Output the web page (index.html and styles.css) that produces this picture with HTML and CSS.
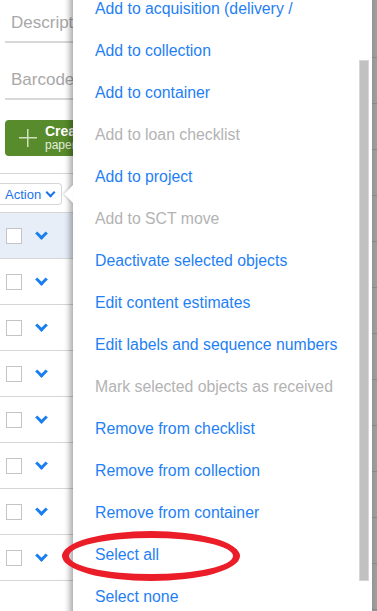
FILE: index.html
```html
<!DOCTYPE html>
<html lang="en">
<head>
  <meta charset="UTF-8">
  <meta name="viewport" content="width=device-width, initial-scale=1.0">
  <title>Objects</title>
  <link rel="stylesheet" href="styles.css">
</head>
<body>
  <div class="page">
    <div class="field">Description</div>
    <div class="field">Barcode</div>
    <button class="create">
      <span class="plus"></span>
      <span class="create-text"><b>Create new</b><small>paper</small></span>
    </button>
    <div class="toolbar">
      <button class="action">Action <span class="chev"></span></button>
    </div>
    <div class="rows">
      <div class="row selected"><span class="check"></span><span class="row-chev"></span></div>
      <div class="row"><span class="check"></span><span class="row-chev"></span></div>
      <div class="row"><span class="check"></span><span class="row-chev"></span></div>
      <div class="row"><span class="check"></span><span class="row-chev"></span></div>
      <div class="row"><span class="check"></span><span class="row-chev"></span></div>
      <div class="row"><span class="check"></span><span class="row-chev"></span></div>
      <div class="row"><span class="check"></span><span class="row-chev"></span></div>
      <div class="row"><span class="check"></span><span class="row-chev"></span></div>
    </div>
  </div>

  <div class="edge"></div>

  <div class="menu">
    <span class="arrow"></span>
    <ul class="menu-list">
      <li>Add to acquisition (delivery /</li>
      <li>Add to collection</li>
      <li>Add to container</li>
      <li class="off">Add to loan checklist</li>
      <li>Add to project</li>
      <li class="off">Add to SCT move</li>
      <li>Deactivate selected objects</li>
      <li>Edit content estimates</li>
      <li>Edit labels and sequence numbers</li>
      <li class="off">Mark selected objects as received</li>
      <li>Remove from checklist</li>
      <li>Remove from collection</li>
      <li>Remove from container</li>
      <li>Select all</li>
      <li>Select none</li>
    </ul>
    <div class="scrollbar"></div>
  </div>

  <div class="circle"></div>
</body>
</html>
```

FILE: styles.css
```css
body {
  margin: 0;
  width: 377px;
  height: 611px;
  overflow: hidden;
  position: relative;
  font-family: 'Liberation Sans', Arial, sans-serif;
  background: #fff;
}
.field {
  margin: 0 0 0 5px;
  height: 43px;
  border-bottom: 2px solid #d8d8d8;
  box-sizing: border-box;
  padding: 13px 0 0 6px;
  font-size: 17px;
  color: #a8a8a8;
  margin-top: 14px;
}
.field:first-child {
  margin-top: 0;
}
.create {
  margin: 20px 0 0 5px;
  height: 36px;
  width: 68px;
  overflow: hidden;
  background: #578b2b;
  border: none;
  border-radius: 4px 0 0 4px;
  display: flex;
  align-items: center;
  padding: 0 0 0 14px;
  gap: 8px;
  color: #fff;
  font-family: inherit;
}
.plus {
  flex: none;
  width: 18px;
  height: 18px;
  background:
    linear-gradient(#cfe0bd, #cfe0bd) center / 18px 1.5px no-repeat,
    linear-gradient(#cfe0bd, #cfe0bd) center / 1.5px 18px no-repeat;
}
.create-text {
  display: flex;
  flex-direction: column;
  text-align: left;
  line-height: 14px;
  white-space: nowrap;
}
.create-text b {
  font-size: 14px;
}
.create-text small {
  font-size: 12px;
  color: #e6eedd;
}
.toolbar {
  margin-top: 17px;
  border-top: 1px solid #d6d6d6;
  padding: 9px 0 7px 0;
}
.action {
  height: 22px;
  width: 62px;
  border: 1px solid #d6d6d6;
  border-left: none;
  border-radius: 0 4px 4px 0;
  background: #fff;
  color: #1a73e8;
  font-size: 13px;
  font-family: inherit;
  padding: 0 0 0 5px;
  text-align: left;
}
.chev {
  display: inline-block;
  width: 5px;
  height: 5px;
  border-right: 2px solid #1a73e8;
  border-bottom: 2px solid #1a73e8;
  transform: rotate(45deg);
  margin: 0 0 3px 2px;
}
.row {
  height: 46px;
  border-bottom: 1px solid #d6d6d6;
  box-sizing: border-box;
  display: flex;
  align-items: center;
  padding-left: 6px;
}
.row.selected {
  background: #e7eef8;
  border-top: 1px solid #d6d6d6;
  height: 47px;
}
.check {
  width: 14px;
  height: 14px;
  border: 1px solid #c4c4c4;
  background: #fff;
}
.row-chev {
  width: 6px;
  height: 6px;
  border-right: 3px solid #1a7ef0;
  border-bottom: 3px solid #1a7ef0;
  transform: rotate(45deg);
  margin: 0 0 5px 15px;
}
.edge {
  position: absolute;
  top: 0;
  right: 0;
  width: 5px;
  height: 611px;
  background: repeating-linear-gradient(#9d9d9d 0 45px, #8a8a8a 45px 46px);
  background-position: 0 12px;
}
.menu {
  position: absolute;
  left: 73px;
  top: -12px;
  width: 299px;
  height: 640px;
  background: #fff;
  box-shadow: -3px 0 6px rgba(0, 0, 0, 0.35);
}
.arrow {
  position: absolute;
  left: -9px;
  top: 197px;
  width: 0;
  height: 0;
  border-top: 9px solid transparent;
  border-bottom: 9px solid transparent;
  border-right: 9px solid #fff;
  filter: drop-shadow(-1px 0 1px rgba(0, 0, 0, 0.2));
}
.menu-list {
  list-style: none;
  margin: 0;
  padding: 0;
}
.menu-list li {
  height: 42px;
  line-height: 42px;
  padding-left: 22px;
  font-size: 15.8px;
  color: #1f7ff5;
  white-space: nowrap;
}
.menu-list li.off {
  color: #b3b3b3;
}
.scrollbar {
  position: absolute;
  left: 286px;
  top: 72px;
  width: 10px;
  height: 521px;
  background: #c1c1c1;
  border: 1px solid #d6d6d6;
  box-sizing: border-box;
}
.circle {
  position: absolute;
  left: 62px;
  top: 531px;
  width: 178px;
  height: 50px;
  border: 7px solid #ea1d28;
  border-radius: 50%;
  box-sizing: border-box;
}
```
